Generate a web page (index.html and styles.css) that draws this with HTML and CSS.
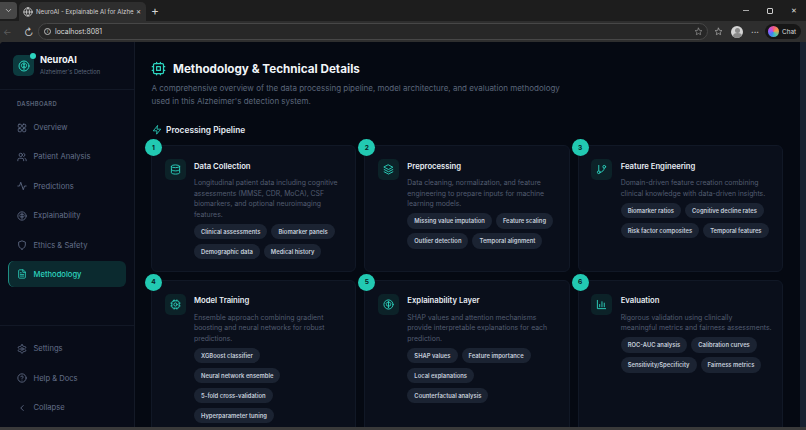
FILE: index.html
```html
<!DOCTYPE html>
<html lang="en">
<head>
<meta charset="utf-8">
<title>NeuroAI - Methodology</title>
<link rel="stylesheet" href="styles.css">
</head>
<body>
<svg class="sprite" width="0" height="0" aria-hidden="true">
  <defs>
    <symbol id="i-brain" viewBox="0 0 24 24"><circle cx="12" cy="12" r="10"/><path d="M12 5v14M12 8.500c-.8-1.800-3.600-1.800-4 0-1.800.5-1.800 2.800-.2 3.500-1 1.800.8 3.500 2.200 3.200.9 0 2-.8 2-1.800M12 8.500c.8-1.800 3.600-1.800 4 0 1.800.5 1.800 2.800.2 3.500 1 1.800-.8 3.500-2.200 3.200-.9 0-2-.8-2-1.800"/></symbol>
    <symbol id="i-grid" viewBox="0 0 24 24"><rect x="3" y="3" width="7.500" height="7.500" rx="2"/><rect x="13.500" y="3" width="7.500" height="7.500" rx="2"/><rect x="3" y="13.500" width="7.500" height="7.500" rx="2"/><rect x="13.500" y="13.500" width="7.500" height="7.500" rx="2"/></symbol>
    <symbol id="i-users" viewBox="0 0 24 24"><path d="M16 21v-2a4 4 0 0 0-4-4H6a4 4 0 0 0-4 4v2"/><circle cx="9" cy="7" r="4"/><path d="M22 21v-2a4 4 0 0 0-3-3.870M16 3.130a4 4 0 0 1 0 7.750"/></symbol>
    <symbol id="i-activity" viewBox="0 0 24 24"><path d="M22 12h-4l-3 9L9 3l-3 9H2"/></symbol>
    <symbol id="i-shield" viewBox="0 0 24 24"><path d="M12 22s8-3 8-10V5l-8-3-8 3v7c0 7 8 10 8 10z"/></symbol>
    <symbol id="i-file" viewBox="0 0 24 24"><path d="M14 2H6a2 2 0 0 0-2 2v16a2 2 0 0 0 2 2h12a2 2 0 0 0 2-2V8z"/><path d="M14 2v6h6M8 13h8M8 17h8M8 9h2"/></symbol>
    <symbol id="i-settings" viewBox="0 0 24 24"><path d="M12.220 2h-.440a2 2 0 0 0-2 2v.180a2 2 0 0 1-1 1.730l-.430.250a2 2 0 0 1-2 0l-.150-.080a2 2 0 0 0-2.730.730l-.220.380a2 2 0 0 0 .730 2.730l.150.100a2 2 0 0 1 1 1.720v.510a2 2 0 0 1-1 1.740l-.150.090a2 2 0 0 0-.730 2.730l.220.380a2 2 0 0 0 2.730.730l.150-.080a2 2 0 0 1 2 0l.430.250a2 2 0 0 1 1 1.730V20a2 2 0 0 0 2 2h.440a2 2 0 0 0 2-2v-.180a2 2 0 0 1 1-1.730l.430-.250a2 2 0 0 1 2 0l.150.080a2 2 0 0 0 2.730-.730l.220-.390a2 2 0 0 0-.730-2.730l-.150-.080a2 2 0 0 1-1-1.740v-.500a2 2 0 0 1 1-1.740l.150-.090a2 2 0 0 0 .730-2.730l-.220-.380a2 2 0 0 0-2.730-.730l-.150.080a2 2 0 0 1-2 0l-.430-.250a2 2 0 0 1-1-1.730V4a2 2 0 0 0-2-2z"/><circle cx="12" cy="12" r="3"/></symbol>
    <symbol id="i-help" viewBox="0 0 24 24"><circle cx="12" cy="12" r="10"/><path d="M9.090 9a3 3 0 0 1 5.830 1c0 2-3 3-3 3M12 17h.010"/></symbol>
    <symbol id="i-chev" viewBox="0 0 24 24"><path d="m15 18-6-6 6-6"/></symbol>
    <symbol id="i-chev-down" viewBox="0 0 24 24"><path d="m6 9 6 6 6-6"/></symbol>
    <symbol id="i-cpu" viewBox="0 0 24 24"><rect x="4" y="4" width="16" height="16" rx="2"/><rect x="9" y="9" width="6" height="6"/><path d="M15 2v2M15 20v2M2 15h2M2 9h2M20 15h2M20 9h2M9 2v2M9 20v2"/></symbol>
    <symbol id="i-chip" viewBox="0 0 24 24"><rect x="4" y="4" width="16" height="16" rx="4"/><circle cx="12" cy="12" r="3.500"/><path d="M15 2v2M15 20v2M2 15h2M2 9h2M20 15h2M20 9h2M9 2v2M9 20v2"/></symbol>
    <symbol id="i-zap" viewBox="0 0 24 24"><path d="M13 2 3 14h9l-1 8 10-12h-9l1-8z"/></symbol>
    <symbol id="i-db" viewBox="0 0 24 24"><ellipse cx="12" cy="5" rx="9" ry="3"/><path d="M3 5v14c0 1.660 4 3 9 3s9-1.340 9-3V5"/><path d="M3 12c0 1.660 4 3 9 3s9-1.340 9-3"/></symbol>
    <symbol id="i-layers" viewBox="0 0 24 24"><path d="m12 2 9.500 5-9.500 5-9.500-5z"/><path d="m2.500 12 9.500 5 9.500-5"/><path d="m2.500 17 9.500 5 9.500-5"/></symbol>
    <symbol id="i-branch" viewBox="0 0 24 24"><path d="M6 3v12"/><circle cx="18" cy="6" r="3"/><circle cx="6" cy="18" r="3"/><path d="M18 9a9 9 0 0 1-9 9"/></symbol>
    <symbol id="i-chart" viewBox="0 0 24 24"><path d="M3 3v18h18"/><path d="M8 17v-5M13 17V6M18 17v-8"/></symbol>
    <symbol id="i-globe" viewBox="0 0 24 24"><circle cx="12" cy="12" r="10"/><path d="M2 12h20M12 2a15 15 0 0 1 4 10 15 15 0 0 1-4 10 15 15 0 0 1-4-10 15 15 0 0 1 4-10z"/></symbol>
    <symbol id="i-star" viewBox="0 0 24 24"><path d="m12 3 2.800 5.800 6.200.900-4.500 4.400 1.100 6.300L12 17.400l-5.600 3 1.100-6.300L3 9.700l6.200-.900z"/></symbol>
  </defs>
</svg>

<header class="tabbar">
  <div class="tab-menu"><svg class="ic ic-9"><use href="#i-chev-down"/></svg></div>
  <div class="tab">
    <svg class="ic ic-10"><use href="#i-globe"/></svg>
    <span class="tab-title">NeuroAI - Explainable AI for Alzhe</span>
    <span class="tab-x">✕</span>
  </div>
  <span class="tab-new">+</span>
  <div class="win-ctrl">
    <span class="win-min"></span>
    <span class="win-max"></span>
    <span class="win-close">✕</span>
  </div>
</header>
<div class="toolbar">
  <span class="nav-back">←</span>
  <span class="nav-reload">↻</span>
  <div class="address">
    <span class="addr-info">i</span>
    <span class="addr-url">localhost:8081</span>
    <svg class="ic ic-9 addr-star"><use href="#i-star"/></svg>
  </div>
  <svg class="ic ic-9 tool-fav"><use href="#i-star"/></svg>
  <span class="avatar"><span class="avatar-head"></span><span class="avatar-body"></span></span>
  <span class="tool-more">···</span>
  <div class="chat"><span class="chat-logo"></span><span>Chat</span></div>
</div>

<div class="app">
  <aside class="sidebar">
    <div class="brand">
      <div class="logo"><svg class="ic ic-12"><use href="#i-brain"/></svg><span class="logo-dot"></span></div>
      <div>
        <div class="brand-name">NeuroAI</div>
        <div class="brand-sub">Alzheimer's Detection</div>
      </div>
    </div>
    <div class="nav-label">DASHBOARD</div>
    <nav class="nav">
      <a class="nav-item"><svg class="ic ic-10"><use href="#i-grid"/></svg>Overview</a>
      <a class="nav-item"><svg class="ic ic-10"><use href="#i-users"/></svg>Patient Analysis</a>
      <a class="nav-item"><svg class="ic ic-10"><use href="#i-activity"/></svg>Predictions</a>
      <a class="nav-item"><svg class="ic ic-10"><use href="#i-brain"/></svg>Explainability</a>
      <a class="nav-item"><svg class="ic ic-10"><use href="#i-shield"/></svg>Ethics &amp; Safety</a>
      <a class="nav-item active"><svg class="ic ic-10"><use href="#i-file"/></svg>Methodology</a>
    </nav>
    <div class="nav-bottom">
      <a class="nav-item"><svg class="ic ic-10"><use href="#i-settings"/></svg>Settings</a>
      <a class="nav-item"><svg class="ic ic-10"><use href="#i-help"/></svg>Help &amp; Docs</a>
      <a class="nav-item"><svg class="ic ic-10"><use href="#i-chev"/></svg>Collapse</a>
    </div>
  </aside>

  <main class="main">
    <div class="page-head">
      <svg class="ic ic-15 teal"><use href="#i-cpu"/></svg>
      <h1>Methodology &amp; Technical Details</h1>
    </div>
    <p class="page-desc">A comprehensive overview of the data processing pipeline, model architecture, and evaluation methodology used in this Alzheimer's detection system.</p>
    <div class="section-head">
      <svg class="ic ic-10 teal"><use href="#i-zap"/></svg>
      <h2>Processing Pipeline</h2>
    </div>
    <div class="grid">
      <article class="card">
        <span class="badge">1</span>
        <div class="card-icon"><svg class="ic ic-11 teal"><use href="#i-db"/></svg></div>
        <div class="card-body">
          <h3>Data Collection</h3>
          <p>Longitudinal patient data including cognitive assessments (MMSE, CDR, MoCA), CSF biomarkers, and optional neuroimaging features.</p>
          <div class="tags"><span>Clinical assessments</span><span>Biomarker panels</span><span>Demographic data</span><span>Medical history</span></div>
        </div>
      </article>
      <article class="card">
        <span class="badge">2</span>
        <div class="card-icon"><svg class="ic ic-11 teal"><use href="#i-layers"/></svg></div>
        <div class="card-body">
          <h3>Preprocessing</h3>
          <p>Data cleaning, normalization, and feature engineering to prepare inputs for machine learning models.</p>
          <div class="tags"><span>Missing value imputation</span><span>Feature scaling</span><span>Outlier detection</span><span>Temporal alignment</span></div>
        </div>
      </article>
      <article class="card">
        <span class="badge">3</span>
        <div class="card-icon"><svg class="ic ic-11 teal"><use href="#i-branch"/></svg></div>
        <div class="card-body">
          <h3>Feature Engineering</h3>
          <p>Domain-driven feature creation combining clinical knowledge with data-driven insights.</p>
          <div class="tags"><span>Biomarker ratios</span><span>Cognitive decline rates</span><span>Risk factor composites</span><span>Temporal features</span></div>
        </div>
      </article>
      <article class="card">
        <span class="badge">4</span>
        <div class="card-icon"><svg class="ic ic-11 teal"><use href="#i-chip"/></svg></div>
        <div class="card-body">
          <h3>Model Training</h3>
          <p>Ensemble approach combining gradient boosting and neural networks for robust predictions.</p>
          <div class="tags"><span>XGBoost classifier</span><span>Neural network ensemble</span><span>5-fold cross-validation</span><span>Hyperparameter tuning</span></div>
        </div>
      </article>
      <article class="card">
        <span class="badge">5</span>
        <div class="card-icon"><svg class="ic ic-11 teal"><use href="#i-brain"/></svg></div>
        <div class="card-body">
          <h3>Explainability Layer</h3>
          <p>SHAP values and attention mechanisms provide interpretable explanations for each prediction.</p>
          <div class="tags tags-narrow"><span>SHAP values</span><span>Feature importance</span><span>Local explanations</span><span>Counterfactual analysis</span></div>
        </div>
      </article>
      <article class="card">
        <span class="badge">6</span>
        <div class="card-icon"><svg class="ic ic-11 teal"><use href="#i-chart"/></svg></div>
        <div class="card-body">
          <h3>Evaluation</h3>
          <p>Rigorous validation using clinically<br>meaningful metrics and fairness assessments.</p>
          <div class="tags"><span>ROC-AUC analysis</span><span>Calibration curves</span><span>Sensitivity/Specificity</span><span>Fairness metrics</span></div>
        </div>
      </article>
    </div>
  </main>
  <div class="scrollbar"></div>
</div>
<div class="taskbar"></div>
</body>
</html>
```
FILE: styles.css
```css
* { box-sizing: border-box; }
html, body { margin: 0; height: 430px; overflow: hidden; }
body {
  background: #2c2c2c;
  font-family: Inter, "Liberation Sans", sans-serif;
  color: #e2e8f0;
  display: flex;
  flex-direction: column;
}
.sprite { position: absolute; }
.ic { fill: none; stroke: currentColor; stroke-width: 2; stroke-linecap: round; stroke-linejoin: round; flex: none; }
.ic-9 { width: 9px; height: 9px; }
.ic-10 { width: 10px; height: 10px; }
.ic-11 { width: 11px; height: 11px; }
.ic-12 { width: 12px; height: 12px; }
.ic-15 { width: 15px; height: 15px; }
.teal { color: #2dd4bf; }

/* browser chrome */
.tabbar { height: 21px; background: #1d1d1d; display: flex; align-items: flex-end; color: #d4d4d4; flex: none; }
.tab-menu { width: 17px; height: 17px; margin: 0 2px 2px 0; background: #474747; border-radius: 0 4px 4px 0; display: flex; align-items: center; justify-content: center; }
.tab { width: 127px; height: 19px; background: #2e2e2e; border-radius: 5px 5px 0 0; display: flex; align-items: center; padding: 0 5px 0 4px; gap: 3px; }
.tab-title { font-size: 6.100px; white-space: nowrap; width: 95px; flex: none; color: #d0d0d0; }
.tab-x { font-size: 6px; margin-left: 2px; }
.tab-new { font-size: 12px; margin: 0 0 2px 5px; line-height: 16px; }
.win-ctrl { margin-left: auto; display: flex; align-items: center; height: 21px; gap: 18px; padding-right: 9px; align-self: flex-start; }
.win-min { width: 6px; height: 1px; background: #aaa; }
.win-max { width: 6px; height: 6px; border: 1px solid #ccc; border-radius: 1px; }
.win-close { font-size: 7px; color: #ddd; }
.toolbar { height: 21px; background: #2e2e2e; display: flex; align-items: center; color: #c8c8c8; flex: none; }
.nav-back { width: 10px; margin-left: 3px; font-size: 9px; color: #5d5d5d; }
.nav-reload { margin-left: 11px; width: 14px; font-size: 10px; }
.address { width: 670px; height: 17px; background: #272727; border: 1px solid #474747; border-radius: 9px; display: flex; align-items: center; padding: 0 4px 0 5px; flex: none; }
.addr-info { width: 7px; height: 7px; border: 1px solid #bbb; border-radius: 50%; font-size: 5px; line-height: 5px; text-align: center; flex: none; }
.addr-url { font-size: 6.900px; margin-left: 4px; color: #d8d8d8; }
.addr-star { margin-left: auto; color: #aaa; stroke-width: 1.500; }
.tool-fav { margin-left: 5.500px; stroke-width: 1.500; }
.avatar { margin-left: 8.500px; width: 12px; height: 12px; border-radius: 50%; background: #d4d4d4; overflow: hidden; display: flex; flex-direction: column; align-items: center; padding-top: 2px; flex: none; }
.avatar-head { width: 5px; height: 5px; border-radius: 50%; background: #8a8a8a; flex: none; }
.avatar-body { width: 9px; height: 6px; border-radius: 50%; background: #8a8a8a; flex: none; }
.tool-more { margin-left: 8px; font-size: 8px; font-weight: 700; }
.chat { margin-left: 6px; width: 36px; height: 15px; background: #161616; border-radius: 8px; display: flex; align-items: center; gap: 3px; padding-left: 3px; font-size: 6.400px; color: #ddd; flex: none; }
.chat-logo { width: 11px; height: 11px; border-radius: 50%; background: conic-gradient(#f0568a, #f59e42, #4cc9a8, #3b82f6, #a855f7, #f0568a); flex: none; }

/* app */
.app { height: 385px; flex: none; display: flex; background: #050912; overflow: hidden; border-radius: 4px 0 0 0; }
.sidebar { width: 135px; flex: none; background: #080c18; border-right: 1px solid #141a27; display: flex; flex-direction: column; }
.brand { height: 48px; flex: none; display: flex; align-items: center; gap: 6px; padding: 0 0 0 13px; border-bottom: 1px solid #121826; }
.logo { position: relative; width: 21px; height: 21px; border-radius: 5px; background: #0c3a3e; color: #2dd4bf; display: flex; align-items: center; justify-content: center; }
.logo-dot { position: absolute; width: 6px; height: 6px; border-radius: 50%; background: #2dd4bf; top: -2px; right: -2px; }
.brand-name { font-size: 9.300px; font-weight: 700; color: #f1f5f9; line-height: 12px; }
.brand-sub { font-size: 5.800px; color: #5b667a; line-height: 10px; margin-top: 1px; }
.nav-label { font-size: 5.800px; font-weight: 600; letter-spacing: .4px; color: #5b667a; margin: 9.500px 0 0 17px; line-height: 8px; }
.nav { display: flex; flex-direction: column; margin-top: 7px; gap: 3.400px; padding: 0 8px; }
.nav-item { height: 26px; display: flex; align-items: center; gap: 6.500px; padding-left: 9px; font-size: 7.600px; color: #64708a; border-radius: 6px; }
.nav-item.active { color: #2dd4bf; background: #0b2a2f; border-left: 1px solid #1f8f83; padding-left: 8px; width: 118px; font-weight: 500; }
.nav-bottom { margin-top: auto; display: flex; flex-direction: column; gap: 3.400px; padding: 10px 8px 6.500px; border-top: 1px solid #121826; }

/* main */
.main { flex: 1; min-width: 0; padding: 15px 17px 0 16px; overflow: hidden; }
.page-head { display: flex; align-items: center; gap: 7px; height: 23px; }
h1 { margin: 0; font-size: 11.700px; font-weight: 700; color: #f1f5f9; }
.page-desc { margin: 2px 0 0 0.5px; font-size: 8px; line-height: 12.500px; color: #5b667a; width: 420px; }
.section-head { display: flex; align-items: center; gap: 4.500px; margin: 15.500px 0 0 0.5px; height: 14px; }
h2 { margin: 0; font-size: 8.350px; font-weight: 600; color: #e2e8f0; }
.grid { display: grid; grid-template-columns: repeat(3, 1fr); gap: 8px; margin-top: 8.500px; }
.card { position: relative; background: #0a0f1b; border: 1px solid #111826; border-radius: 6px; padding: 13px 8.300px 11.500px 12.500px; display: flex; gap: 8.500px; }
.badge { position: absolute; left: -7px; top: -7px; width: 17px; height: 17px; border-radius: 50%; background: #22c9b2; color: #07211f; font-size: 6.600px; font-weight: 700; display: flex; align-items: center; justify-content: center; }
.card-icon { width: 21px; height: 21px; flex: none; border-radius: 5px; background: #0c2228; display: flex; align-items: center; justify-content: center; }
.card-body { flex: 1; min-width: 0; }
h3 { margin: 1.500px 0 0; font-size: 7.700px; font-weight: 600; line-height: 12px; color: #e8edf4; }
.card p { margin: 5.500px 0 0; font-size: 6.900px; line-height: 10.500px; color: #525c70; }
.tags { display: flex; flex-wrap: wrap; gap: 4.500px 4px; margin-top: 3.500px; }
.tags-narrow { padding-right: 10px; }
.tags span { height: 15.500px; padding: 0 7px; border-radius: 8px; background: #1b2332; color: #c6cfdc; font-size: 5.850px; font-weight: 600; display: flex; align-items: center; }

.scrollbar { width: 6px; flex: none; background: #182130; }
.taskbar { height: 3px; background: #3a3a3a; flex: none; }
```
